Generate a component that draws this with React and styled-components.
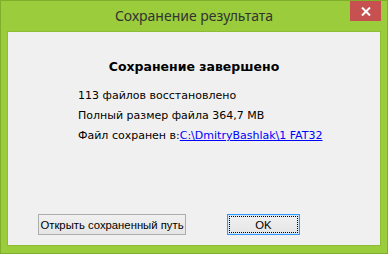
import React from "react";
import styled, { createGlobalStyle } from "styled-components";

const Global = createGlobalStyle`
  html, body { margin: 0; padding: 0; width: 388px; height: 254px; overflow: hidden; }
  body { font-family: "DejaVu Sans", sans-serif; }
`;

const Window = styled.div`
  box-sizing: border-box;
  width: 388px;
  height: 254px;
  background: #9acc3b;
  border: 1px solid #7fae2c;
  display: flex;
  flex-direction: column;
  padding: 0 6px 7px 6px;
`;

const TitleBar = styled.div`
  position: relative;
  height: 30px;
  display: flex;
  align-items: center;
  justify-content: center;
`;

const Title = styled.div`
  font-family: "Noto Sans", "Open Sans", sans-serif;
  font-size: 14px;
  color: #333;
  margin-top: -1px;
`;

const CloseButton = styled.div`
  position: absolute;
  top: 0;
  right: 0;
  width: 31px;
  height: 20px;
  background: #c75050;
  display: flex;
  align-items: center;
  justify-content: center;
`;

const Client = styled.div`
  flex: 1;
  background: #f0f0f0;
  border: 1px solid #8dbd35;
  display: flex;
  flex-direction: column;
`;

const Heading = styled.div`
  margin-top: 27px;
  text-align: center;
  font-weight: bold;
  font-size: 12.5px;
  color: #000;
`;

const Info = styled.div`
  margin-top: 12px;
  padding-left: 70px;
  display: flex;
  flex-direction: column;
`;

const Line = styled.div`
  font-size: 11px;
  line-height: 20px;
  height: 20px;
  color: #000;
  white-space: nowrap;
`;

const Link = styled.a`
  color: #0000ff;
  text-decoration: underline;
`;

const ButtonRow = styled.div`
  margin-top: auto;
  margin-bottom: 10px;
  display: flex;
  padding-left: 30px;
`;

const Button = styled.button`
  box-sizing: border-box;
  height: 21px;
  width: ${(p) => p.$w}px;
  margin-left: ${(p) => p.$ml || 0}px;
  padding: 0;
  background: linear-gradient(#f0f0f0, #e5e5e5);
  border: 1px solid ${(p) => (p.$default ? "#3399ff" : "#adadad")};
  font-family: "Liberation Sans", "Arial", sans-serif;
  font-size: 11.3px;
  white-space: nowrap;
  color: #000;
  position: relative;
  display: flex;
  align-items: center;
  justify-content: center;
  ${(p) => p.$default && `box-shadow: inset 0 0 0 1px #cfe6fd;`}
`;

const FocusRing = styled.span`
  position: absolute;
  inset: 1px;
  border: 1px dotted #000;
`;

export default function App() {
  return (
    <>
      <Global />
      <Window>
        <TitleBar>
          <Title>Сохранение результата</Title>
          <CloseButton>
            <svg width="10" height="9" viewBox="0 0 10 9">
              <path d="M1 0.5 L9 8.5 M9 0.5 L1 8.5" stroke="#fff" strokeWidth="2" />
            </svg>
          </CloseButton>
        </TitleBar>
        <Client>
          <Heading>Сохранение завершено</Heading>
          <Info>
            <Line>113 файлов восстановлено</Line>
            <Line>Полный размер файла 364,7 MB</Line>
            <Line>
              Файл сохранен в:<Link href="#">C:\DmitryBashlak\1 FAT32</Link>
            </Line>
          </Info>
          <ButtonRow>
            <Button $w={148}>Открыть сохраненный путь</Button>
            <Button $w={73} $ml={41} $default>
              <FocusRing />
              OK
            </Button>
          </ButtonRow>
        </Client>
      </Window>
    </>
  );
}
